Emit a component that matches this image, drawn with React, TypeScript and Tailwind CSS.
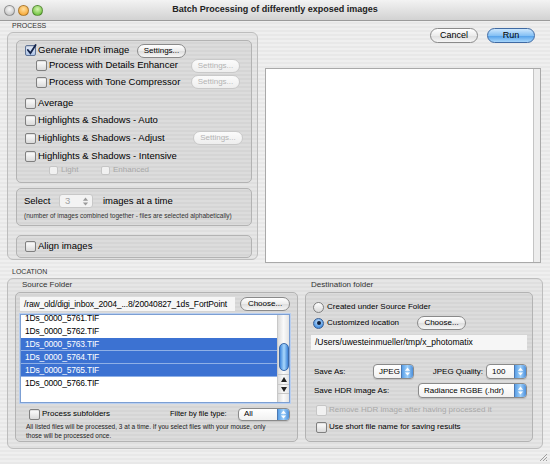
import React from "react";

const stripes =
  "bg-[repeating-linear-gradient(180deg,#efefef_0px,#efefef_2px,#e8e8e8_2px,#e8e8e8_4px)]";

function Check({
  checked = false,
  disabled = false,
  small = false,
}: {
  checked?: boolean;
  disabled?: boolean;
  small?: boolean;
}) {
  const size = small ? "h-[9px] w-[9px]" : "h-[11px] w-[11px]";
  const look = disabled
    ? "border-[#c6c6c6] bg-[#f1f1f1]"
    : checked
    ? "border-[#5f7396] bg-[linear-gradient(#e4ecf9,#aec4e7)] shadow-[inset_0_1px_1px_rgba(0,0,0,0.15)]"
    : "border-[#808080] bg-[linear-gradient(#ffffff,#dadada)] shadow-[inset_0_1px_1px_rgba(0,0,0,0.12)]";
  return (
    <span className={`relative inline-flex shrink-0 rounded-[2px] border ${size} ${look}`}>
      {checked && (
        <svg viewBox="0 0 12 12" className="absolute left-[0px] top-[-2px] h-[11px] w-[11px] overflow-visible">
          <path d="M2 6.5 L4.8 10 L10.5 1" stroke="#14244a" strokeWidth="2" fill="none" strokeLinecap="round" />
        </svg>
      )}
    </span>
  );
}

function Radio({ on = false }: { on?: boolean }) {
  return (
    <span
      className={`inline-flex h-[11px] w-[11px] shrink-0 items-center justify-center rounded-full border ${
        on
          ? "border-[#3b5f93] bg-[radial-gradient(circle_at_50%_35%,#cfe6fc,#4c95e3_70%,#2f6fc4)]"
          : "border-[#808080] bg-[linear-gradient(#ffffff,#d8d8d8)]"
      }`}
    >
      {on && <span className="h-[4px] w-[4px] rounded-full bg-[#10203e]" />}
    </span>
  );
}

function Btn({
  children,
  w,
  disabled = false,
  blue = false,
  h = "h-[14px]",
  text = "text-[8px]",
}: {
  children: React.ReactNode;
  w: string;
  disabled?: boolean;
  blue?: boolean;
  h?: string;
  text?: string;
}) {
  const look = disabled
    ? "border-[#c9c9c9] text-[#b3b3b3] bg-[linear-gradient(#fbfbfb,#eeeeee)]"
    : blue
    ? "border-[#3f6aa3] text-black bg-[linear-gradient(#cde7fd,#86c1f4_50%,#519fe9_52%,#a7d6fb)]"
    : "border-[#8a8a8a] text-black bg-[linear-gradient(#ffffff,#ececec_50%,#dedede_52%,#f6f6f6)]";
  return (
    <span className={`inline-flex shrink-0 items-center justify-center rounded-full border ${w} ${h} ${text} ${look}`}>
      {children}
    </span>
  );
}

function Arrows({ color = "#ffffff" }: { color?: string }) {
  return (
    <svg viewBox="0 0 8 10" className="h-[9px] w-[7px]">
      <path d="M4 0.5 L7 4 L1 4 Z" fill={color} />
      <path d="M4 9.5 L7 6 L1 6 Z" fill={color} />
    </svg>
  );
}

function Popup({ label, w, h = "h-[15px]" }: { label: string; w: string; h?: string }) {
  return (
    <span
      className={`inline-flex shrink-0 overflow-hidden rounded-[4px] border border-[#8a8a8a] bg-[linear-gradient(#ffffff,#f1f1f1)] shadow-[0_1px_1px_rgba(0,0,0,0.12)] ${w} ${h}`}
    >
      <span className="flex flex-1 items-center overflow-hidden whitespace-nowrap pl-[5px] text-[8px]">{label}</span>
      <span className="flex w-[12px] items-center justify-center border-l border-[#4b78b2] bg-[linear-gradient(90deg,#5a9fe6,#9fd0fa_50%,#4b8fdc)]">
        <Arrows />
      </span>
    </span>
  );
}

function Light({ c }: { c: string }) {
  return <span className={`h-[11px] w-[11px] rounded-full border border-black/30 ${c}`} />;
}

const files = [
  { n: "1Ds_0000_5761.TIF", s: false },
  { n: "1Ds_0000_5762.TIF", s: false },
  { n: "1Ds_0000_5763.TIF", s: true },
  { n: "1Ds_0000_5764.TIF", s: true },
  { n: "1Ds_0000_5765.TIF", s: true },
  { n: "1Ds_0000_5766.TIF", s: false },
];

const box = "rounded-[6px] border border-[#bdbdbd] bg-black/[0.035]";
const inner = "rounded-[5px] border border-[#b3b3b3] bg-black/[0.045]";

export default function App() {
  return (
    <div
      className={`relative h-[464px] w-[550px] overflow-hidden font-['Liberation_Sans',Arial,sans-serif] text-[9.5px] text-black ${stripes}`}
    >
      {/* title bar */}
      <div className="grid h-[21px] grid-cols-[1fr_auto_1fr] items-center border-b border-[#9b9b9b] bg-[linear-gradient(#f3f3f3,#d2d2d2)]">
        <div className="flex gap-[3px] pl-[4px]">
          <Light c="bg-[radial-gradient(circle_at_50%_35%,#f8f8f8,#b9b9b9)]" />
          <Light c="bg-[radial-gradient(circle_at_50%_35%,#ffe0a0,#f59a1c)]" />
          <Light c="bg-[radial-gradient(circle_at_50%_35%,#d6f5b0,#56b623)]" />
        </div>
        <div className="text-[9px] font-bold text-[#222]">Batch Processing of differently exposed images</div>
        <div />
      </div>

      {/* top section */}
      <div className="flex pl-[7px]">
        <div className="w-[251px]">
          <div className="h-[9px] pl-[5px] text-[7px] leading-[9px] text-[#333]">PROCESS</div>
          <div className={`mt-[2px] h-[228px] pl-[8px] pr-[5px] pt-[7px] ${box}`}>
            <div className={`flex h-[143px] flex-col pl-[8px] pt-[2px] ${inner}`}>
              <div className="flex h-[15px] items-center">
                <span className="flex w-[112px] items-center gap-[2px]">
                  <Check checked />
                  <span>Generate HDR image</span>
                </span>
                <Btn w="w-[49px]">Settings...</Btn>
              </div>
              <div className="flex h-[15px] items-center pl-[11px]">
                <span className="flex w-[155px] items-center gap-[2px]">
                  <Check />
                  <span>Process with Details Enhancer</span>
                </span>
                <Btn w="w-[49px]" disabled>
                  Settings...
                </Btn>
              </div>
              <div className="mt-[1px] flex h-[16px] items-center pl-[11px]">
                <span className="flex w-[155px] items-center gap-[2px]">
                  <Check />
                  <span>Process with Tone Compressor</span>
                </span>
                <Btn w="w-[49px]" disabled>
                  Settings...
                </Btn>
              </div>
              <div className="mt-[5px] flex h-[16px] items-center gap-[2px]">
                <Check />
                <span>Average</span>
              </div>
              <div className="mt-[1px] flex h-[16px] items-center gap-[2px]">
                <Check />
                <span>Highlights &amp; Shadows - Auto</span>
              </div>
              <div className="mt-[2px] flex h-[16px] items-center">
                <span className="flex w-[168px] items-center gap-[2px]">
                  <Check />
                  <span>Highlights &amp; Shadows - Adjust</span>
                </span>
                <Btn w="w-[50px]" disabled>
                  Settings...
                </Btn>
              </div>
              <div className="mt-[2px] flex h-[16px] items-center gap-[2px]">
                <Check />
                <span>Highlights &amp; Shadows - Intensive</span>
              </div>
              <div className="flex h-[12px] items-center pl-[24px] text-[8px] text-[#a8a8a8]">
                <span className="flex w-[52px] items-center gap-[3px]">
                  <Check small disabled />
                  <span>Light</span>
                </span>
                <span className="flex items-center gap-[3px]">
                  <Check small disabled />
                  <span>Enhanced</span>
                </span>
              </div>
            </div>

            <div className={`mt-[5px] h-[38px] pl-[7px] pt-[5px] ${inner}`}>
              <div className="flex h-[14px] items-center">
                <span className="w-[35px]">Select</span>
                <span className="flex h-[14px] w-[34px] items-center justify-between rounded-[3px] border border-[#c8c8c8] bg-[#f3f3f3] pl-[5px] pr-[3px] text-[#a0a0a0]">
                  <span>3</span>
                  <Arrows color="#9a9a9a" />
                </span>
                <span className="ml-[10px]">images at a time</span>
              </div>
              <div className="mt-[4px] text-[6.5px] leading-[8px] text-[#333]">
                (number of images combined together - files are selected alphabetically)
              </div>
            </div>

            <div className={`mt-[9px] flex h-[23px] items-center gap-[2px] pl-[8px] ${inner}`}>
              <Check />
              <span>Align images</span>
            </div>
          </div>
        </div>

        <div className="ml-[7px] w-[276px]">
          <div className="mt-[7px] flex justify-end gap-[9px] pr-[6px]">
            <Btn w="w-[48px]" h="h-[15px]" text="text-[9px]">
              Cancel
            </Btn>
            <Btn w="w-[48px]" h="h-[15px]" text="text-[9px]" blue>
              Run
            </Btn>
          </div>
          <div className="mt-[25px] flex h-[195px] border border-[#a9a9a9]">
            <div className="flex-1 bg-white" />
            <div className="w-[7px] border-l border-[#c4c4c4] bg-[#ededed]" />
          </div>
        </div>
      </div>

      {/* location */}
      <div className="mt-[4px] h-[10px] pl-[12px] text-[7px] leading-[10px] text-[#333]">LOCATION</div>
      <div className={`mx-[7px] mt-[1px] flex h-[171px] gap-[7px] pl-[7px] text-[8px] ${box}`}>
        <div className="w-[283px]">
          <div className="h-[12px] pl-[7px] leading-[12px] text-[#333]">Source Folder</div>
          <div className={`mt-[1px] h-[150px] pl-[4px] pt-[4px] ${inner}`}>
            <div className="flex items-center gap-[5px]">
              <span className="flex h-[14px] w-[215px] items-center overflow-hidden whitespace-nowrap bg-[#f6f6f6] pl-[4px] text-[8.5px] tracking-[-0.15px]">
                /raw_old/digi_inbox_2004_...8/20040827_1ds_FortPoint
              </span>
              <Btn w="w-[50px]">Choose...</Btn>
            </div>

            <div className="mt-[3px] flex h-[89px] w-[270px] overflow-hidden border border-[#7c9fd3] bg-white shadow-[0_0_0_1px_#b9cff0]">
              <div className="flex-1 overflow-hidden">
                <div className="mt-[-3px]">
                  {files.map((f) => (
                    <div
                      key={f.n}
                      className={`flex h-[13px] items-center pl-[4px] text-[8.5px] tracking-[-0.2px] ${
                        f.s ? "border-b border-[#8fb0e6] bg-[#3c72d2] text-white" : "text-black"
                      }`}
                    >
                      {f.n}
                    </div>
                  ))}
                </div>
              </div>
              <div className="flex w-[12px] flex-col border-l border-[#c8c8c8] bg-[linear-gradient(90deg,#dcdcdc,#fafafa_50%,#e4e4e4)]">
                <div className="flex-1">
                  <div className="mx-auto mt-[28px] h-[28px] w-[10px] rounded-full border border-[#3b69a8] bg-[linear-gradient(90deg,#3f86dc,#a9d8fc_50%,#3c82d8)]" />
                </div>
                <div className="flex h-[10px] items-center justify-center border-t border-[#c8c8c8]">
                  <svg viewBox="0 0 6 5" className="h-[5px] w-[6px]">
                    <path d="M3 0 L6 5 L0 5 Z" fill="#222" />
                  </svg>
                </div>
                <div className="mb-[8px] flex h-[10px] items-center justify-center border-y border-[#c8c8c8]">
                  <svg viewBox="0 0 6 5" className="h-[5px] w-[6px]">
                    <path d="M0 0 L6 0 L3 5 Z" fill="#222" />
                  </svg>
                </div>
              </div>
            </div>

            <div className="mt-[4px] flex h-[14px] items-center">
              <span className="flex w-[150px] items-center gap-[2px] pl-[9px]">
                <Check />
                <span>Process subfolders</span>
              </span>
              <span className="w-[68px] text-[7.5px]">Filter by file type:</span>
              <Popup label="All" w="w-[52px]" h="h-[13px]" />
            </div>
            <div className="mt-[1px] pl-[6px] text-[6.5px] leading-[9px] text-[#222]">
              All listed files will be processed, 3 at a time. If you select files with your mouse, only
              <br />
              those will be processed once.
            </div>
          </div>
        </div>

        <div className="w-[228px]">
          <div className="h-[12px] pl-[6px] leading-[12px] text-[#333]">Destination folder</div>
          <div className={`mt-[1px] h-[150px] pt-[7px] ${inner}`}>
            <div className="flex h-[14px] items-center gap-[3px] pl-[7px]">
              <Radio />
              <span>Created under Source Folder</span>
            </div>
            <div className="mt-[2px] flex h-[14px] items-center pl-[7px]">
              <span className="flex w-[104px] items-center gap-[3px]">
                <Radio on />
                <span>Customized location</span>
              </span>
              <Btn w="w-[49px]">Choose...</Btn>
            </div>
            <div className="ml-[5px] mt-[5px] flex h-[15px] w-[216px] items-center bg-[#f6f6f6] pl-[4px] text-[8.5px]">
              /Users/uwesteinmueller/tmp/x_photomatix
            </div>
            <div className="mt-[14px] flex h-[15px] items-center pl-[8px]">
              <span className="w-[59px]">Save As:</span>
              <Popup label="JPEG" w="w-[41px]" />
              <span className="w-[72px] pr-[3px] text-right">JPEG Quality:</span>
              <Popup label="100" w="w-[41px]" />
            </div>
            <div className="mt-[4px] flex h-[15px] items-center pl-[8px]">
              <span className="w-[104px]">Save HDR image As:</span>
              <Popup label="Radiance RGBE (.hdr)" w="w-[109px]" />
            </div>
            <div className="mt-[5px] flex h-[14px] items-center gap-[2px] pl-[10px] text-[#a9a9a9]">
              <Check disabled />
              <span>Remove HDR image after having processed it</span>
            </div>
            <div className="mt-[3px] flex h-[14px] items-center gap-[2px] pl-[10px]">
              <Check />
              <span>Use short file name for saving results</span>
            </div>
          </div>
        </div>
      </div>

      {/* resize grip */}
      <svg viewBox="0 0 10 10" className="absolute bottom-[2px] right-[2px] h-[10px] w-[10px]">
        <path d="M9 2 L2 9 M9 5 L5 9 M9 8 L8 9" stroke="#8a8a8a" strokeWidth="0.8" />
      </svg>
    </div>
  );
}
